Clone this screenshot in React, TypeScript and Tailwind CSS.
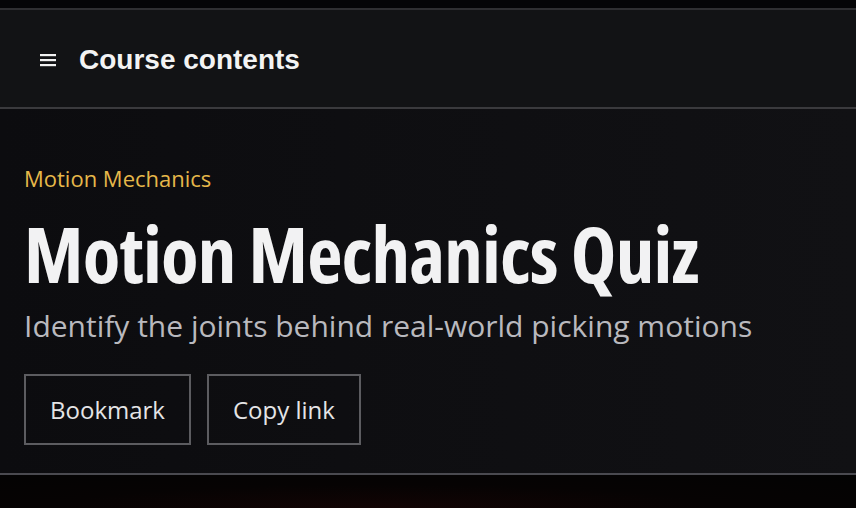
import React from "react";

export default function App() {
  return (
    <div className="w-[856px] h-[508px] overflow-hidden bg-[#050506] flex flex-col">
      <div className="h-[8px] shrink-0 bg-[#050507]" />
      <header className="shrink-0 h-[101px] border-t-2 border-t-[#2f2f32] border-b-2 border-b-[#3a3a3d] bg-[#121315] flex items-center pl-[40px] gap-[23px]">
        <svg width="16" height="14" viewBox="0 0 16 14" className="mt-[3px]">
          <rect x="0" y="1" width="16" height="2.2" fill="#f2f2f2" />
          <rect x="0" y="6" width="16" height="2.2" fill="#f2f2f2" />
          <rect x="0" y="11" width="16" height="2.2" fill="#f2f2f2" />
        </svg>
        <span className="mt-[2px] text-[28px] font-bold text-[#f3f3f3] leading-none [font-family:'Liberation_Sans',Arial,sans-serif]">
          Course contents
        </span>
      </header>
      <section className="shrink-0 h-[366px] border-b-2 border-b-[#4a4a50] bg-[linear-gradient(90deg,#0c0c0f_0%,#0f0f12_60%,#111114_100%)] px-[24px] pt-[53px] [font-family:'Open_Sans',sans-serif]">
        <div className="text-[22px] leading-[33px] text-[#e6b84a]">Motion Mechanics</div>
        <h1 className="mt-[20px] text-[77px] leading-[77px] font-bold text-[#f2f2f3] font-stretch-condensed tracking-[-0.8px]">
          Motion Mechanics Quiz
        </h1>
        <div className="mt-[11px] text-[30px] leading-[45px] text-[#b9b9be]">
          Identify the joints behind real-world picking motions
        </div>
        <div className="mt-[26px] flex gap-[16px]">
          <button className="h-[71px] px-[24px] border-2 border-[#5c5c60] text-[24px] text-[#e4e4e6] bg-transparent">
            Bookmark
          </button>
          <button className="h-[71px] px-[24px] border-2 border-[#5c5c60] text-[24px] text-[#e4e4e6] bg-transparent">
            Copy link
          </button>
        </div>
      </section>
      <div className="flex-1 bg-[radial-gradient(ellipse_at_45%_100%,#120404_0%,#060303_50%,#030303_100%)]" />
    </div>
  );
}
